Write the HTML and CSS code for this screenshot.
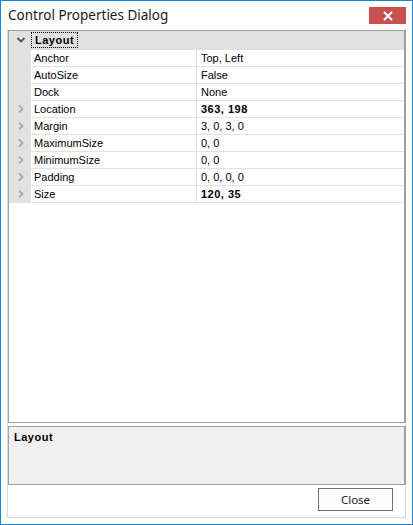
FILE: index.html
```html
<!DOCTYPE html>
<html>
<head>
<meta charset="utf-8">
<link rel="stylesheet" href="styles.css">
</head>
<body>
<div class="window">
  <div class="titlebar">
    <div class="title">Control Properties Dialog</div>
    <div class="close-x">
      <svg width="10" height="10" viewBox="0 0 10 10"><path d="M1 1 L9 9 M9 1 L1 9" stroke="#fff" stroke-width="2" fill="none"/></svg>
    </div>
  </div>
  <div class="panel">
    <div class="grid">
      <div class="cat">
        <div class="gut"><svg width="10" height="8" viewBox="0 0 10 8"><path d="M1.5 2 L5 5.5 L8.5 2" stroke="#555" stroke-width="1.8" fill="none"/></svg></div>
        <div class="cat-name"><span class="focus">Layout</span></div>
      </div>
      <div class="row"><div class="gut"></div><div class="name">Anchor</div><div class="val">Top, Left</div></div>
      <div class="row"><div class="gut"></div><div class="name">AutoSize</div><div class="val">False</div></div>
      <div class="row"><div class="gut"></div><div class="name">Dock</div><div class="val">None</div></div>
      <div class="row"><div class="gut"><svg class="chev" width="8" height="10" viewBox="0 0 8 10"><path d="M2 1.5 L5.5 5 L2 8.5" stroke="#a0a0a0" stroke-width="1.6" fill="none"/></svg></div><div class="name">Location</div><div class="val b">363, 198</div></div>
      <div class="row"><div class="gut"><svg class="chev" width="8" height="10" viewBox="0 0 8 10"><path d="M2 1.5 L5.5 5 L2 8.5" stroke="#a0a0a0" stroke-width="1.6" fill="none"/></svg></div><div class="name">Margin</div><div class="val">3, 0, 3, 0</div></div>
      <div class="row"><div class="gut"><svg class="chev" width="8" height="10" viewBox="0 0 8 10"><path d="M2 1.5 L5.5 5 L2 8.5" stroke="#a0a0a0" stroke-width="1.6" fill="none"/></svg></div><div class="name">MaximumSize</div><div class="val">0, 0</div></div>
      <div class="row"><div class="gut"><svg class="chev" width="8" height="10" viewBox="0 0 8 10"><path d="M2 1.5 L5.5 5 L2 8.5" stroke="#a0a0a0" stroke-width="1.6" fill="none"/></svg></div><div class="name">MinimumSize</div><div class="val">0, 0</div></div>
      <div class="row"><div class="gut"><svg class="chev" width="8" height="10" viewBox="0 0 8 10"><path d="M2 1.5 L5.5 5 L2 8.5" stroke="#a0a0a0" stroke-width="1.6" fill="none"/></svg></div><div class="name">Padding</div><div class="val">0, 0, 0, 0</div></div>
      <div class="row"><div class="gut"><svg class="chev" width="8" height="10" viewBox="0 0 8 10"><path d="M2 1.5 L5.5 5 L2 8.5" stroke="#a0a0a0" stroke-width="1.6" fill="none"/></svg></div><div class="name">Size</div><div class="val b">120, 35</div></div>
    </div>
    <div class="desc"><div class="desc-title">Layout</div></div>
    <div class="buttons"><button class="btn">Close</button></div>
  </div>
</div>
</body>
</html>
```
FILE: styles.css
```css
html, body {
  margin: 0;
  padding: 0;
  background: #ffffff;
}
.window {
  width: 413px;
  height: 525px;
  box-sizing: border-box;
  border: 1px solid #1883d7;
  background: #ffffff;
  display: flex;
  flex-direction: column;
}
.titlebar {
  height: 28px;
  display: flex;
  align-items: flex-start;
  justify-content: space-between;
  flex: none;
}
.title {
  font-family: "Noto Sans", "Liberation Sans", sans-serif;
  font-size: 13.5px;
  color: #1b1b1b;
  padding-left: 7px;
  margin-top: 5px;
  line-height: 18px;
}
.close-x {
  width: 37px;
  height: 17px;
  margin-top: 6px;
  margin-right: 6px;
  background: #c75050;
  display: flex;
  align-items: center;
  justify-content: center;
}
.close-x svg { display: block; }
.panel {
  flex: 1;
  margin: 0 6px 6px 6px;
  border: 1px solid #d9d9d9;
  border-top: none;
  display: flex;
  flex-direction: column;
  padding-top: 1px;
}
.grid {
  height: 393px;
  box-sizing: border-box;
  border: 1px solid #a0a0a0;
  border-right-width: 2px;
  margin-right: -1px;
  background: #ffffff;
  font-family: "Liberation Sans", Arial, sans-serif;
  font-size: 11px;
  color: #000;
}
.cat {
  display: flex;
  height: 18px;
  background: #e1e1e1;
}
.gut {
  width: 21px;
  flex: none;
  background: #e1e1e1;
  display: flex;
  align-items: center;
  justify-content: center;
}
.cat .gut { padding-left: 1px; }
.row .gut { padding-left: 1px; }
.gut svg { display: block; }
.cat-name {
  display: flex;
  align-items: center;
  font-weight: bold;
  letter-spacing: 0.5px;
}
.focus {
  border: 1px dotted #000;
  padding: 0 3px 0 3px;
  line-height: 14px;
  margin-left: 0;
}
.row {
  display: flex;
  height: 17px;
}
.name {
  width: 166px;
  flex: none;
  box-sizing: border-box;
  padding-left: 3px;
  border-top: 1px solid #e1e1e1;
  border-right: 1px solid #e1e1e1;
  line-height: 16px;
  white-space: nowrap;
}
.val {
  flex: 1;
  padding-left: 4px;
  border-top: 1px solid #e1e1e1;
  line-height: 16px;
  white-space: nowrap;
}
.row:last-child .name,
.row:last-child .val {
  border-bottom: 1px solid #e1e1e1;
}
.row:last-child { height: 18px; }
.val.b {
  font-weight: bold;
  letter-spacing: 0.5px;
}
.desc {
  margin-top: 3px;
  height: 59px;
  box-sizing: border-box;
  border: 1px solid #a0a0a0;
  border-right-width: 2px;
  margin-right: -1px;
  background: #f0f0f0;
  padding: 4px 0 0 5px;
}
.desc-title {
  font-family: "Liberation Sans", Arial, sans-serif;
  font-size: 11px;
  font-weight: bold;
  letter-spacing: 0.5px;
  color: #000;
}
.buttons {
  flex: 1;
  display: flex;
  justify-content: flex-end;
  align-items: flex-start;
  padding-top: 3px;
  padding-right: 12px;
}
.btn {
  width: 75px;
  height: 23px;
  box-sizing: border-box;
  border: 1px solid #707070;
  background: #fdfdfd;
  font-family: "Noto Sans", "Liberation Sans", sans-serif;
  font-size: 11.5px;
  color: #1b1b1b;
  padding: 0;
  margin: 0;
}
```
